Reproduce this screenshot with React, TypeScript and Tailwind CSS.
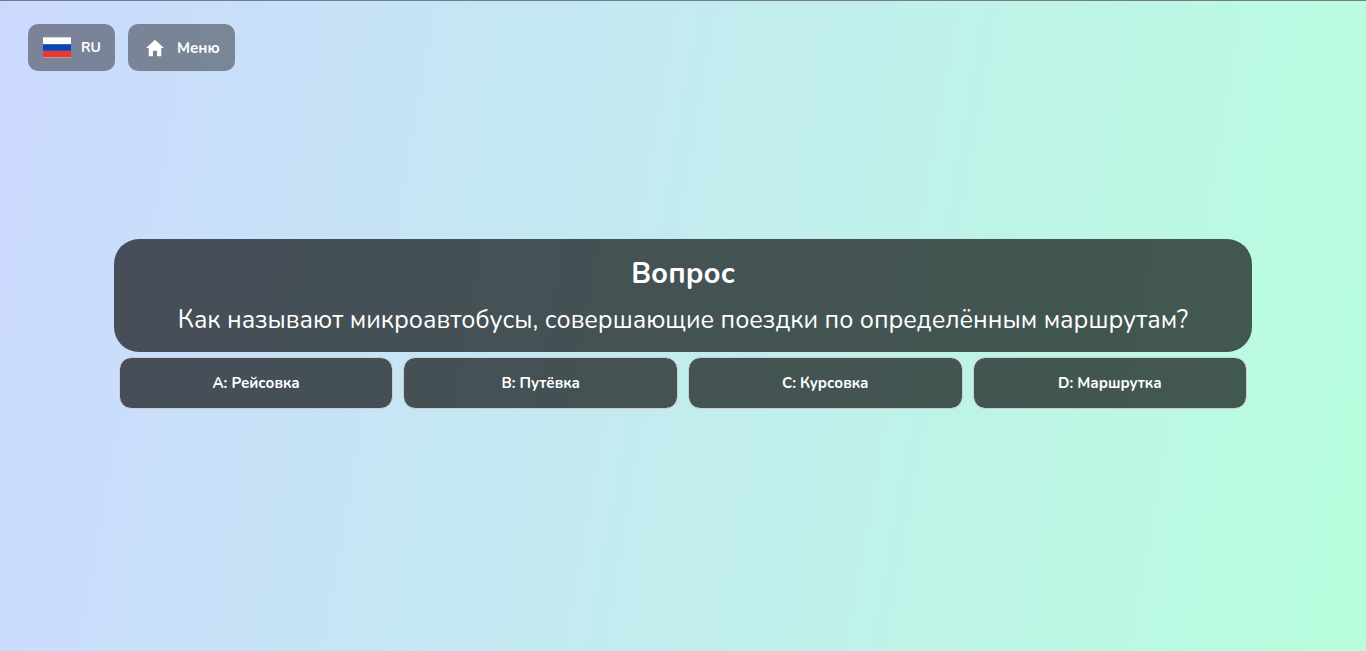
import { IoMdHome } from "react-icons/io";

const answers = ["A: Рейсовка", "B: Путёвка", "C: Курсовка", "D: Маршрутка"];

function RussianFlag() {
  return (
    <svg viewBox="0 0 28 21" className="h-[21px] w-7" aria-hidden="true">
      <defs>
        <clipPath id="flag-shape">
          <rect width="28" height="21" rx="1" />
        </clipPath>
      </defs>
      <g clipPath="url(#flag-shape)">
        <rect width="28" height="7" fill="#ffffff" />
        <rect y="7" width="28" height="7" fill="#0b46b9" />
        <rect y="14" width="28" height="7" fill="#e63b35" />
        <rect width="28" height="1" fill="#d5d8df" />
        <rect y="20" width="28" height="1" fill="#d98f96" />
        <rect y="7" width="28" height="1" fill="#3564c0" />
        <rect y="13" width="28" height="1" fill="#3b4ba6" />
      </g>
    </svg>
  );
}

export default function App() {
  return (
    <div className="flex min-h-screen flex-col border-t border-[#717e88] bg-[linear-gradient(100deg,#ccd9ff,#b8ffde)] font-['Nunito','Lato','Open_Sans',sans-serif] text-white">
      <header className="flex h-[70px] items-end gap-[13px] px-7">
        <button className="flex h-[47px] items-center gap-2.5 rounded-[10px] bg-black/40 pr-3.5 pl-[15px] text-sm font-bold">
          <RussianFlag />
          RU
        </button>
        <button className="flex h-[47px] items-center gap-[11px] rounded-[10px] bg-black/40 pr-[15px] pl-4 text-[15px] leading-6 font-bold">
          <IoMdHome className="size-[22px]" aria-hidden="true" />
          Меню
        </button>
      </header>
      <main className="mb-[70px] flex grow flex-col items-center justify-center">
        <div className="w-5/6">
          <section className="rounded-[25px] bg-black/65 px-5 pt-[17px] pb-3 text-center">
            <h1 className="text-[29px] leading-9 font-bold">Вопрос</h1>
            <p className="mt-2 text-[25px] leading-10">
              Как называют микроавтобусы, совершающие поездки по определённым маршрутам?
            </p>
          </section>
          <div className="grid grid-cols-4 gap-2.5 p-[5px]">
            {answers.map((answer) => (
              <button
                key={answer}
                className="h-[52px] rounded-xl border border-[#cccccc] bg-black/65 bg-clip-padding text-[15px] leading-6 font-bold"
              >
                {answer}
              </button>
            ))}
          </div>
        </div>
      </main>
    </div>
  );
}
